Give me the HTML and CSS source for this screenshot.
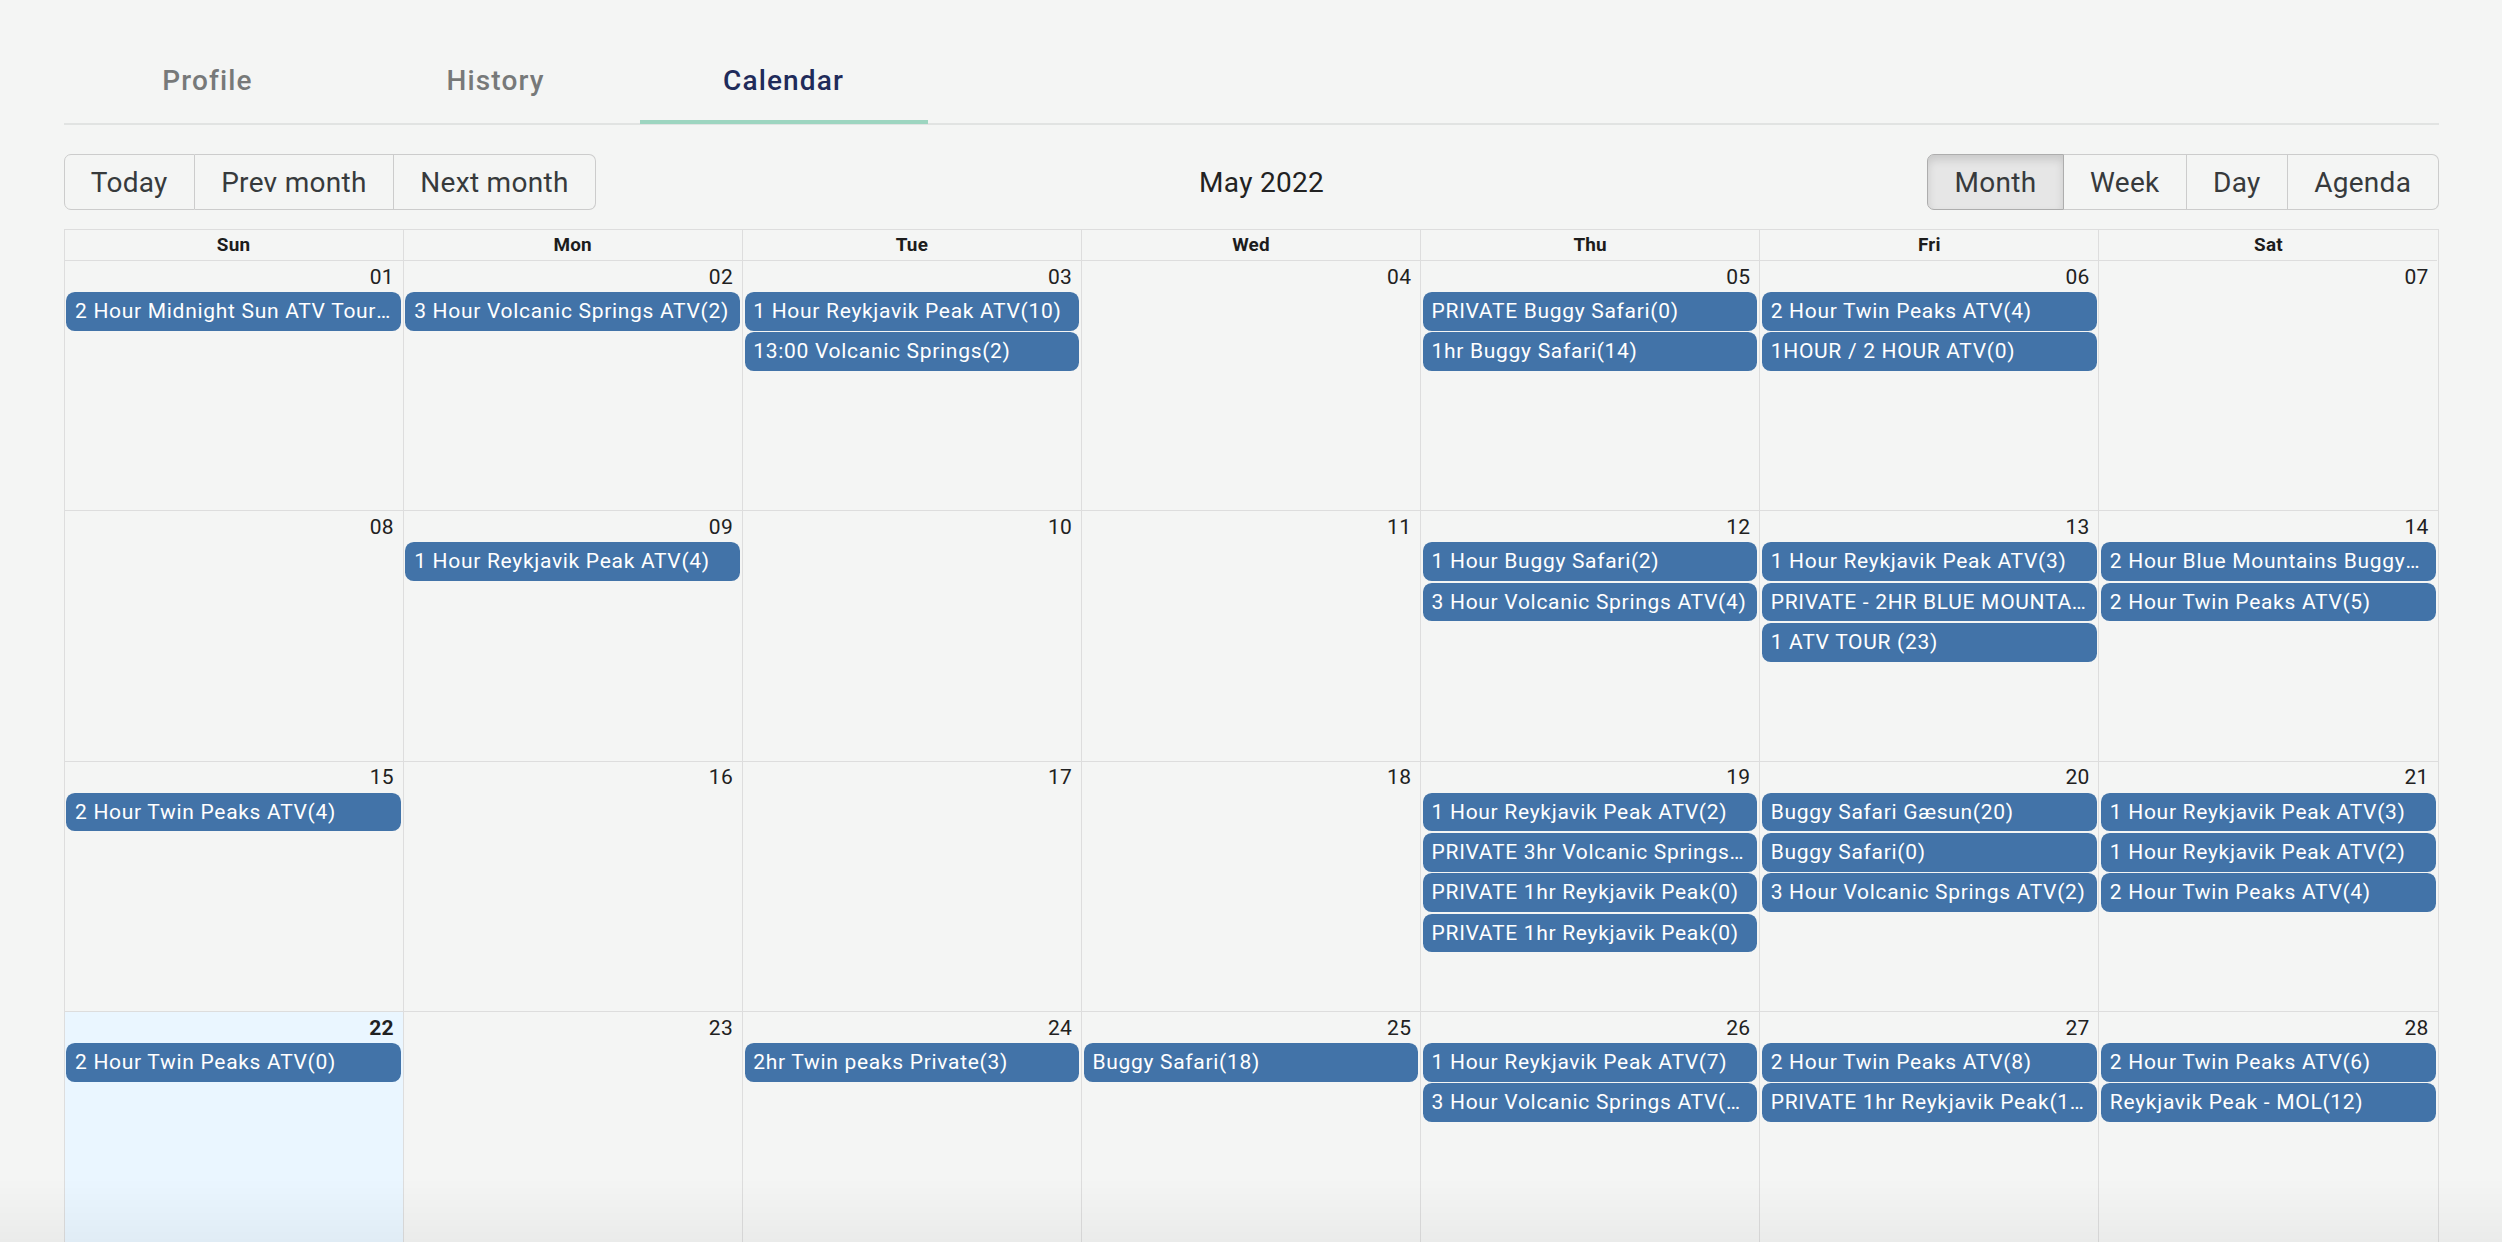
FILE: index.html
```html
<!DOCTYPE html>
<html lang="en">
<head>
<meta charset="utf-8">
<title>Calendar</title>
<link rel="stylesheet" href="styles.css">
</head>
<body>
<div class="page">
  <nav class="tabs">
    <div class="tab">Profile</div>
    <div class="tab">History</div>
    <div class="tab active">Calendar</div>
  </nav>

  <div class="toolbar">
    <div class="btn-group">
      <button class="btn">Today</button>
      <button class="btn">Prev month</button>
      <button class="btn">Next month</button>
    </div>
    <div class="toolbar-label">May 2022</div>
    <div class="btn-group">
      <button class="btn active">Month</button>
      <button class="btn">Week</button>
      <button class="btn">Day</button>
      <button class="btn">Agenda</button>
    </div>
  </div>

  <div class="month">
    <div class="head-row">
      <div class="head">Sun</div>
      <div class="head">Mon</div>
      <div class="head">Tue</div>
      <div class="head">Wed</div>
      <div class="head">Thu</div>
      <div class="head">Fri</div>
      <div class="head">Sat</div>
    </div>

    <div class="week">
      <div class="day"><div class="date">01</div><div class="event">2 Hour Midnight Sun ATV Tour(2)</div></div>
      <div class="day"><div class="date">02</div><div class="event">3 Hour Volcanic Springs ATV(2)</div></div>
      <div class="day"><div class="date">03</div><div class="event">1 Hour Reykjavik Peak ATV(10)</div><div class="event">13:00 Volcanic Springs(2)</div></div>
      <div class="day"><div class="date">04</div></div>
      <div class="day"><div class="date">05</div><div class="event">PRIVATE Buggy Safari(0)</div><div class="event">1hr Buggy Safari(14)</div></div>
      <div class="day"><div class="date">06</div><div class="event">2 Hour Twin Peaks ATV(4)</div><div class="event">1HOUR / 2 HOUR ATV(0)</div></div>
      <div class="day"><div class="date">07</div></div>
    </div>

    <div class="week">
      <div class="day"><div class="date">08</div></div>
      <div class="day"><div class="date">09</div><div class="event">1 Hour Reykjavik Peak ATV(4)</div></div>
      <div class="day"><div class="date">10</div></div>
      <div class="day"><div class="date">11</div></div>
      <div class="day"><div class="date">12</div><div class="event">1 Hour Buggy Safari(2)</div><div class="event">3 Hour Volcanic Springs ATV(4)</div></div>
      <div class="day"><div class="date">13</div><div class="event">1 Hour Reykjavik Peak ATV(3)</div><div class="event">PRIVATE - 2HR BLUE MOUNTAINS(2)</div><div class="event">1 ATV TOUR (23)</div></div>
      <div class="day"><div class="date">14</div><div class="event">2 Hour Blue Mountains Buggy(4)</div><div class="event">2 Hour Twin Peaks ATV(5)</div></div>
    </div>

    <div class="week">
      <div class="day"><div class="date">15</div><div class="event">2 Hour Twin Peaks ATV(4)</div></div>
      <div class="day"><div class="date">16</div></div>
      <div class="day"><div class="date">17</div></div>
      <div class="day"><div class="date">18</div></div>
      <div class="day"><div class="date">19</div><div class="event">1 Hour Reykjavik Peak ATV(2)</div><div class="event">PRIVATE 3hr Volcanic Springs(0)</div><div class="event">PRIVATE 1hr Reykjavik Peak(0)</div><div class="event">PRIVATE 1hr Reykjavik Peak(0)</div></div>
      <div class="day"><div class="date">20</div><div class="event">Buggy Safari Gæsun(20)</div><div class="event">Buggy Safari(0)</div><div class="event">3 Hour Volcanic Springs ATV(2)</div></div>
      <div class="day"><div class="date">21</div><div class="event">1 Hour Reykjavik Peak ATV(3)</div><div class="event">1 Hour Reykjavik Peak ATV(2)</div><div class="event">2 Hour Twin Peaks ATV(4)</div></div>
    </div>

    <div class="week">
      <div class="day today"><div class="date">22</div><div class="event">2 Hour Twin Peaks ATV(0)</div></div>
      <div class="day"><div class="date">23</div></div>
      <div class="day"><div class="date">24</div><div class="event">2hr Twin peaks Private(3)</div></div>
      <div class="day"><div class="date">25</div><div class="event">Buggy Safari(18)</div></div>
      <div class="day"><div class="date">26</div><div class="event">1 Hour Reykjavik Peak ATV(7)</div><div class="event">3 Hour Volcanic Springs ATV(11)</div></div>
      <div class="day"><div class="date">27</div><div class="event">2 Hour Twin Peaks ATV(8)</div><div class="event">PRIVATE 1hr Reykjavik Peak(10)</div></div>
      <div class="day"><div class="date">28</div><div class="event">2 Hour Twin Peaks ATV(6)</div><div class="event">Reykjavik Peak - MOL(12)</div></div>
    </div>

    <div class="week">
      <div class="day"><div class="date">29</div></div>
      <div class="day"><div class="date">30</div></div>
      <div class="day"><div class="date">31</div></div>
      <div class="day off"><div class="date">01</div></div>
      <div class="day off"><div class="date">02</div></div>
      <div class="day off"><div class="date">03</div></div>
      <div class="day off"><div class="date">04</div></div>
    </div>
  </div>
</div>
<div class="fade"></div>
</body>
</html>
```

FILE: styles.css
```css
* { box-sizing: border-box; }

html, body {
  margin: 0;
  padding: 0;
  background: #f4f5f4;
  font-family: Roboto, "Noto Sans", "Liberation Sans", sans-serif;
  color: #212121;
}

.page {
  width: 2375px;
  margin: 0 auto;
}

/* Tabs */
.tabs {
  display: flex;
  margin-top: 37px;
  height: 88px;
  border-bottom: 2px solid #e1e3e2;
}

.tab {
  width: 288px;
  height: 87px;
  padding-top: 3px;
  display: flex;
  align-items: center;
  justify-content: center;
  font-size: 28px;
  font-weight: 500;
  letter-spacing: 0.04em;
  color: #777979;
  border-bottom: 4px solid transparent;
}

.tab.active {
  color: #1f2b5a;
  border-bottom-color: #9dd5c0;
}

/* Toolbar */
.toolbar {
  display: flex;
  align-items: center;
  margin-top: 29px;
  margin-bottom: 19px;
}

.btn-group {
  display: flex;
}

.btn {
  height: 56px;
  margin: 0;
  padding: 0 26.25px;
  font-family: inherit;
  font-size: 28px;
  letter-spacing: 0.3px;
  color: #373a3c;
  background: transparent;
  border: 1px solid #ccc;
  border-radius: 0;
  display: flex;
  align-items: center;
}

.btn + .btn {
  border-left: none;
}

.btn:first-child {
  border-radius: 7px 0 0 7px;
}

.btn:last-child {
  border-radius: 0 7px 7px 0;
}

.btn.active {
  background: #e6e6e6;
  border-color: #adadad;
  box-shadow: inset 0 5px 9px rgba(0, 0, 0, 0.125);
}

.toolbar-label {
  flex: 1;
  text-align: center;
  font-size: 28px;
  letter-spacing: 0.3px;
  color: #222;
}

/* Month view */
.month {
  border-top: 1px solid #ddd;
  border-right: 1px solid #ddd;
}

.head-row,
.week {
  display: grid;
  grid-template-columns: repeat(7, 1fr);
}

.head {
  height: 31px;
  line-height: 30px;
  text-align: center;
  font-size: 18.9px;
  font-weight: 700;
  letter-spacing: 0.2px;
  color: #1c1c1c;
  border-left: 1px solid #ddd;
  border-bottom: 1px solid #ddd;
}

.week {
  height: 250.4px;
  border-bottom: 1px solid #ddd;
}

.day {
  border-left: 1px solid #ddd;
  min-width: 0;
  display: flex;
  flex-direction: column;
}

.day.today {
  background: #eaf6ff;
}

.day.off {
  background: #e6e6e6;
}

.date {
  height: 31px;
  padding: 3.5px 8.75px 0 0;
  text-align: right;
  font-size: 21px;
  line-height: 24.6px;
  letter-spacing: 0.3px;
  color: #212121;
}

.today .date {
  font-weight: 700;
}

.event {
  height: 38.7px;
  margin: 0 1.75px 1.6px 1.75px;
  padding: 0 8.75px;
  line-height: 38.7px;
  font-size: 21px;
  letter-spacing: 0.7px;
  color: #fff;
  background: #4273a8;
  border-radius: 8.75px;
  white-space: nowrap;
  overflow: hidden;
  text-overflow: ellipsis;
}

.fade {
  position: fixed;
  left: 0;
  right: 0;
  bottom: 0;
  height: 64px;
  pointer-events: none;
  background: linear-gradient(to bottom, rgba(0, 0, 0, 0), rgba(0, 0, 0, 0.04));
}
```
